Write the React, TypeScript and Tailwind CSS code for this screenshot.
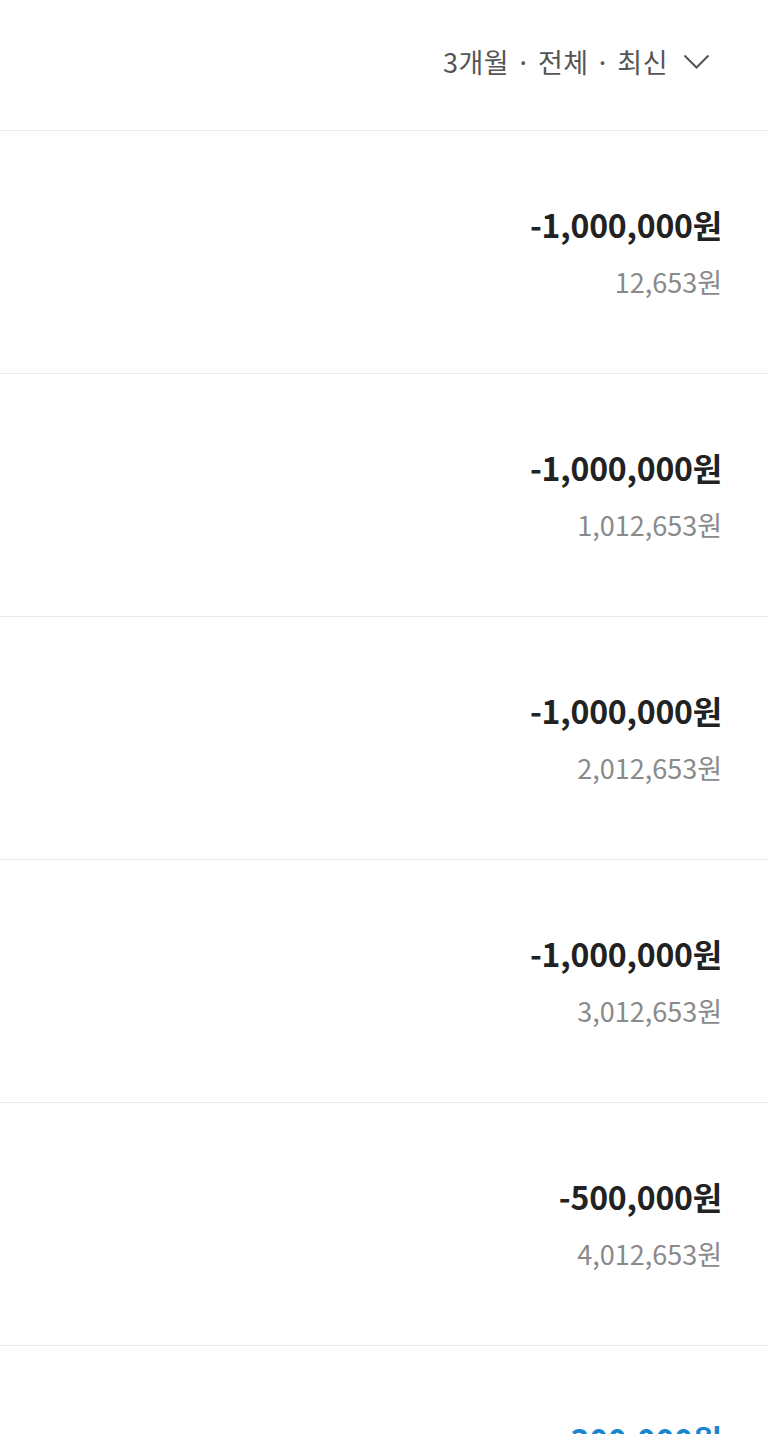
import React from "react";

const rows = [
  { amount: "-1,000,000원", balance: "12,653원", blue: false },
  { amount: "-1,000,000원", balance: "1,012,653원", blue: false },
  { amount: "-1,000,000원", balance: "2,012,653원", blue: false },
  { amount: "-1,000,000원", balance: "3,012,653원", blue: false },
  { amount: "-500,000원", balance: "4,012,653원", blue: false },
  { amount: "300,000원", balance: "4,512,653원", blue: true },
];

export default function App() {
  return (
    <div
      className="w-[768px] h-[1434px] overflow-hidden bg-white"
      style={{ fontFamily: '"Noto Sans CJK KR", "Noto Sans", sans-serif' }}
    >
      <div className="h-[131px] border-b border-[#ebebeb] flex items-center justify-end pr-[58px] pb-[7px]">
        <span className="text-[27px] leading-none text-[#555] tracking-[0.5px]">
          3개월 · 전체 · 최신
        </span>
        <svg className="ml-[15px]" width="27" height="16" viewBox="0 0 27 16" fill="none">
          <path d="M1.5 1.5 L13.5 13.5 L25.5 1.5" stroke="#555" strokeWidth="2" />
        </svg>
      </div>
      {rows.map((r, i) => (
        <div
          key={i}
          className="h-[243px] border-b border-[#ebebeb] flex flex-col items-end pr-[46px] pt-[73px]"
        >
          <div
            className={`text-[32px] leading-[40px] font-bold tracking-[-0.2px] ${
              r.blue ? "text-[#1a86cf]" : "text-[#222]"
            }`}
          >
            {r.amount}
          </div>
          <div className="mt-[20px] text-[27px] leading-[36px] text-[#8a8a8a]">
            {r.balance}
          </div>
        </div>
      ))}
    </div>
  );
}
